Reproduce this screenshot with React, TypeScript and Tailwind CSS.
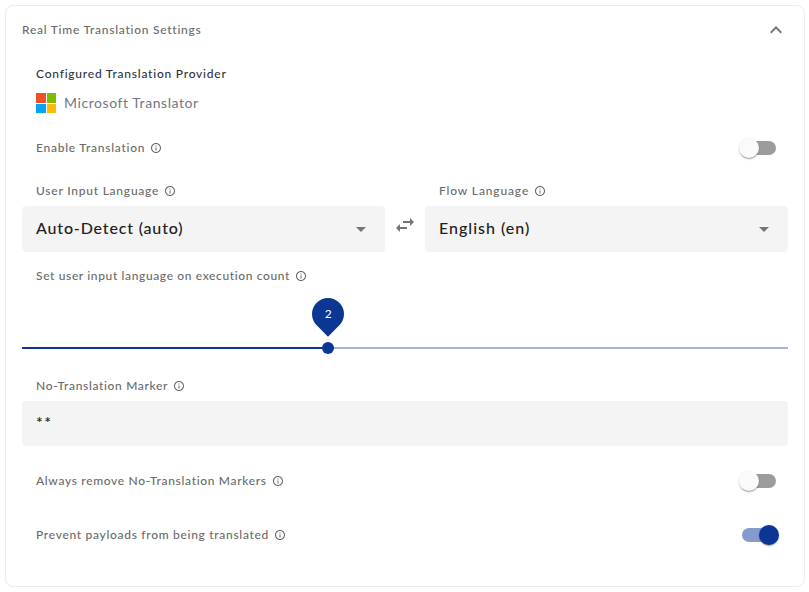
import React from "react";

function InfoIcon() {
  return (
    <svg viewBox="0 0 24 24" className="h-3 w-3 shrink-0" fill="#666">
      <path d="M11 7h2v2h-2zm0 4h2v6h-2zm1-9C6.48 2 2 6.48 2 12s4.480 10 10 10 10-4.480 10-10S17.520 2 12 2zm0 18c-4.410 0-8-3.590-8-8s3.590-8 8-8 8 3.590 8 8-3.590 8-8 8z" />
    </svg>
  );
}

function Label({ text, className }: { text: string; className: string }) {
  return (
    <div className="flex h-5 items-center text-xs font-medium text-[#6b6b6b]">
      <span className={`whitespace-nowrap ${className}`}>{text}</span>
      <InfoIcon />
    </div>
  );
}

function Toggle({ on }: { on: boolean }) {
  return (
    <div className={`relative mr-3 h-3.5 w-[34px] rounded-full ${on ? "bg-[#859bcb]" : "bg-[#9c9c9c]"}`}>
      <div
        className={`absolute -top-[3px] h-5 w-5 rounded-full shadow-[0_2px_1px_-1px_rgba(0,0,0,0.2),0_1px_1px_rgba(0,0,0,0.14),0_1px_3px_rgba(0,0,0,0.12)] ${
          on ? "left-[17px] bg-[#0b3694]" : "-left-[3px] bg-[#fafafa]"
        }`}
      />
    </div>
  );
}

function SelectBox({ text, spacing }: { text: string; spacing: string }) {
  return (
    <div className="flex h-[46px] items-center justify-between rounded bg-[#f4f4f4] pr-3 pl-3.5">
      <span className={`pb-0.5 text-base font-medium whitespace-nowrap text-[#212121] ${spacing}`}>{text}</span>
      <svg viewBox="0 0 24 24" className="h-6 w-6" fill="#757575">
        <path d="M7 10l5 5 5-5z" />
      </svg>
    </div>
  );
}

export default function App() {
  return (
    <div className="h-[592px] w-[809px] bg-white pt-[5px] pl-[5px] font-['Lato','Liberation_Sans',sans-serif]">
      <div className="flex h-[582px] w-[800px] flex-col rounded-lg border border-[#ebebeb] px-4">
        <div className="flex h-12 items-center justify-between">
          <span className="text-xs font-medium tracking-[0.74px] text-[#6b6b6b]">Real Time Translation Settings</span>
          <svg viewBox="0 0 24 24" className="h-6 w-6" fill="#757575">
            <path d="M12 8l-6 6 1.410 1.410L12 10.830l4.590 4.580L18 14z" />
          </svg>
        </div>

        <div className="mt-2.5 flex h-5 items-center pl-3.5">
          <span className="text-xs font-medium tracking-[0.77px] text-[#32323e]">Configured Translation Provider</span>
        </div>
        <div className="mt-[9px] flex h-5 items-center gap-2 pl-3.5">
          <div className="grid h-5 w-5 grid-cols-2 gap-px">
            <div className="bg-[#f35022]" />
            <div className="bg-[#80bb03]" />
            <div className="bg-[#03a5f0]" />
            <div className="bg-[#ffba08]" />
          </div>
          <span className="text-sm tracking-[0.57px] text-[#717784]">Microsoft Translator</span>
        </div>

        <div className="mt-[25px] flex h-5 items-center justify-between pl-3.5">
          <Label text="Enable Translation" className="w-[114px] tracking-[0.75px]" />
          <Toggle on={false} />
        </div>

        <div className="mt-[23px] flex">
          <div className="w-[363px]">
            <div className="mb-[5px] pl-3.5">
              <Label text="User Input Language" className="w-[128px] tracking-[0.77px]" />
            </div>
            <SelectBox text="Auto-Detect (auto)" spacing="tracking-[0.84px]" />
          </div>
          <div className="flex w-10 justify-center pt-8">
            <svg viewBox="0 0 24 24" className="h-6 w-6" fill="#757575">
              <path d="M6.990 11L3 15l3.990 4v-3H14v-2H6.990v-3zM21 9l-3.990-4v3H10v2h7.010v3L21 9z" />
            </svg>
          </div>
          <div className="w-[363px]">
            <div className="mb-[5px] pl-3.5">
              <Label text="Flow Language" className="w-[95px] tracking-[0.86px]" />
            </div>
            <SelectBox text="English (en)" spacing="tracking-[1px]" />
          </div>
        </div>

        <div className="mt-3.5 pl-3.5">
          <Label text="Set user input language on execution count" className="w-[259px] tracking-[0.63px]" />
        </div>

        <div className="relative mt-[61px] flex h-0.5">
          <div className="w-[306px] bg-[#0b3694]" />
          <div className="flex-1 bg-[#a5b4d8]" />
          <div className="absolute -top-[5px] left-[300px] h-3 w-3 rounded-full bg-[#0b3694]" />
          <div className="absolute -top-[49px] left-[290px] flex h-8 w-8 -rotate-45 items-center justify-center rounded-[50%_50%_50%_0] bg-[#0b3694]">
            <span className="rotate-45 text-xs text-white">2</span>
          </div>
        </div>

        <div className="mt-[27px] pl-3.5">
          <Label text="No-Translation Marker" className="w-[137px] tracking-[0.66px]" />
        </div>
        <div className="mt-[5px] flex h-[45px] items-center rounded bg-[#f4f4f4] pb-1 pl-3.5 text-base font-medium tracking-[1.5px] text-[#212121]">
          **
        </div>

        <div className="mt-[25px] flex h-5 items-center justify-between pl-3.5">
          <Label text="Always remove No-Translation Markers" className="w-[236px] tracking-[0.67px]" />
          <Toggle on={false} />
        </div>
        <div className="mt-[34px] flex h-5 items-center justify-between pl-3.5">
          <Label text="Prevent payloads from being translated" className="w-[238px] tracking-[0.7px]" />
          <Toggle on />
        </div>
      </div>
    </div>
  );
}
